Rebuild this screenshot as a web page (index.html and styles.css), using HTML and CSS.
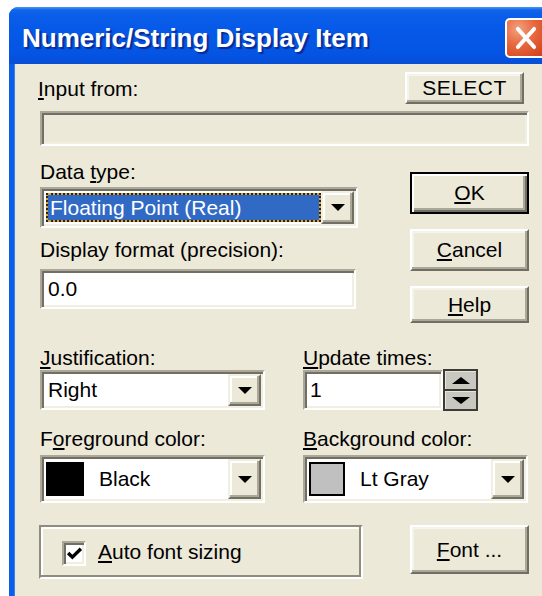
FILE: index.html
```html
<!DOCTYPE html>
<html lang="en">
<head>
<meta charset="utf-8">
<title>Numeric/String Display Item</title>
<link rel="stylesheet" href="styles.css">
</head>
<body>
<div class="window">
  <div class="titlebar">
    <span class="title">Numeric/String Display Item</span>
    <div class="close">
      <svg viewBox="0 0 42 40" width="42" height="40" aria-hidden="true">
        <path d="M12 10 L30 30 M30 10 L12 30" stroke="#fff" stroke-width="4.5" stroke-linecap="round"/>
      </svg>
    </div>
  </div>

  <div class="client">
    <div class="row-input">
      <span class="label"><u>I</u>nput from:</span>
      <div class="btn btn-select">SELECT</div>
    </div>
    <div class="field field-disabled field-input"></div>

    <div class="mid">
      <div class="mid-left">
        <div class="label label-dtype">Data <u>t</u>ype:</div>
        <div class="combo combo-dtype">
          <div class="combo-value">
            <span class="sel">Floating Point (Real)</span>
          </div>
          <div class="drop"><span class="tri"></span></div>
        </div>
        <div class="label label-format">Display format (precision):</div>
        <div class="field field-format">0.0</div>
      </div>
      <div class="mid-right">
        <div class="btn btn-side btn-default"><span><u>O</u>K</span></div>
        <div class="btn btn-side btn-cancel"><span><u>C</u>ancel</span></div>
        <div class="btn btn-side btn-help"><span><u>H</u>elp</span></div>
      </div>
    </div>

    <div class="pairs">
      <div class="label"><u>J</u>ustification:</div>
      <div class="label"><u>U</u>pdate times:</div>
      <div class="combo combo-small">
        <div class="combo-value">Right</div>
        <div class="drop"><span class="tri"></span></div>
      </div>
      <div class="spin-row">
        <div class="field field-spin">1</div>
        <div class="spin">
          <div class="spin-half"><span class="tri tri-up"></span></div>
          <div class="spin-half"><span class="tri"></span></div>
        </div>
      </div>

      <div class="label label-color">F<u>o</u>reground color:</div>
      <div class="label label-color"><u>B</u>ackground color:</div>
      <div class="combo combo-color">
        <div class="combo-value"><span class="swatch swatch-black"></span><span class="color-name">Black</span></div>
        <div class="drop"><span class="tri"></span></div>
      </div>
      <div class="combo combo-color">
        <div class="combo-value"><span class="swatch swatch-gray"></span><span class="color-name">Lt Gray</span></div>
        <div class="drop"><span class="tri"></span></div>
      </div>
    </div>

    <div class="bottom">
      <div class="groupbox">
        <span class="checkbox">
          <svg viewBox="0 0 16 16" width="17" height="17" aria-hidden="true">
            <path d="M2 7.5 L6 11.5 L14 3.5" fill="none" stroke="#000" stroke-width="3.2"/>
          </svg>
        </span>
        <span class="check-label"><u>A</u>uto font sizing</span>
      </div>
      <div class="btn btn-font"><span><u>F</u>ont ...</span></div>
    </div>
  </div>
</div>
</body>
</html>
```

FILE: styles.css
```css
html, body {
  margin: 0;
  padding: 0;
  background: #fff;
  overflow: hidden;
}

body {
  padding: 7px 0 0 9px;
  font-family: "Liberation Sans", Arial, sans-serif;
  font-size: 21px;
  color: #000;
}

u {
  text-decoration: underline;
  text-underline-offset: 2px;
  text-decoration-thickness: 2px;
}

/* ---------- window frame ---------- */
.window {
  width: 548px;
  height: 589px;
  display: flex;
  flex-direction: column;
  border-radius: 9px 9px 0 0;
  overflow: hidden;
  background: #0a5ee8;
}

.titlebar {
  height: 57px;
  flex: none;
  display: flex;
  align-items: center;
  padding: 0 10px 0 13px;
  background: linear-gradient(#4a97f7 0, #1266ec 5%, #0a5fea 12%, #0658e6 45%, #0555e4 80%, #0550df 92%, #0a4fd0 100%);
}

.title {
  color: #fff;
  font-weight: bold;
  font-size: 26px;
  text-shadow: 2px 2px 1px #0b2a94;
  margin-top: 5px;
}

.close {
  margin-left: auto;
  width: 42px;
  height: 40px;
  box-sizing: border-box;
  border: 2px solid #fff;
  border-radius: 5px;
  background: radial-gradient(circle at 30% 25%, #f3a280 0, #e96b42 40%, #d84c24 78%, #c84119 100%);
  display: flex;
  align-items: center;
  justify-content: center;
  margin-top: 4px;
}
.close svg {
  display: block;
  width: 38px;
  height: 36px;
}

.client {
  flex: 1;
  margin-left: 5px;
  background: #ece9d8;
  padding: 8px 0 0 26px;
  box-shadow: inset 1px 0 #3a80ee;
}

/* ---------- text ---------- */
.label {
  line-height: 22px;
  white-space: nowrap;
}

/* ---------- classic 3d controls ---------- */
.btn {
  box-sizing: border-box;
  background: #ece9d8;
  border: 2px solid;
  border-color: #ffffff #716f64 #716f64 #ffffff;
  box-shadow: inset -2px -2px #aca899, inset 2px 2px #f5f4ec;
  display: flex;
  align-items: center;
  justify-content: center;
  line-height: 22px;
}

.field {
  box-sizing: border-box;
  background: #fff;
  border: 2px solid;
  border-color: #aca899 #ffffff #ffffff #aca899;
  box-shadow: inset 2px 2px #716f64, inset -2px -2px #f1efe2;
  padding: 0 6px;
  display: flex;
  align-items: center;
}

.field-disabled {
  background: #ece9d8;
}

/* ---------- first rows ---------- */
.row-input {
  width: 484px;
  display: flex;
  align-items: center;
  justify-content: space-between;
  height: 32px;
}
.row-input .label {
  margin-top: 2px;
  margin-left: -2px;
}
.btn-select {
  width: 119px;
  height: 32px;
  letter-spacing: 0.5px;
}

.field-input {
  margin-top: 7px;
  width: 489px;
  height: 35px;
}

/* ---------- data type / format + side buttons ---------- */
.mid {
  display: flex;
  width: 489px;
  justify-content: space-between;
}

.mid-left {
  width: 318px;
}
.label-dtype {
  margin-top: 15px;
}
.combo-dtype {
  margin-top: 4px;
  height: 41px;
}
.label-format {
  margin-top: 11px;
}
.field-format {
  margin-top: 8px;
  width: 316px;
  height: 40px;
}

.mid-right {
  width: 119px;
  padding-top: 26px;
  display: flex;
  flex-direction: column;
  gap: 15px;
}
.btn-side {
  height: 42px;
}
.btn-help {
  height: 37px;
}
.btn-default {
  border: 2px solid #000;
  box-shadow: inset 2px 2px #fff, inset -2px -2px #716f64, inset -4px -4px #aca899;
}

/* ---------- combo boxes ---------- */
.combo {
  box-sizing: border-box;
  display: flex;
  align-items: stretch;
  background: #fff;
  border: 2px solid;
  border-color: #aca899 #ffffff #ffffff #aca899;
  box-shadow: inset 2px 2px #716f64, inset -2px -2px #f1efe2;
  padding: 2px;
}
.combo-value {
  flex: 1;
  display: flex;
  align-items: center;
  padding-left: 4px;
  white-space: nowrap;
}
.combo-dtype .combo-value {
  padding: 2px 0 2px 2px;
}
.sel {
  flex: 1;
  align-self: stretch;
  display: flex;
  align-items: center;
  padding-left: 2px;
  color: #fff;
  border: 2px dotted #2a2418;
  background: linear-gradient(#316ac5, #316ac5) padding-box, #d9a23c border-box;
}

.drop {
  width: 33px;
  flex: none;
  box-sizing: border-box;
  background: #ece9d8;
  border: 2px solid;
  border-color: #f1efe2 #716f64 #716f64 #f1efe2;
  box-shadow: inset -2px -2px #aca899, inset 2px 2px #fff;
  display: flex;
  align-items: center;
  justify-content: center;
}
.tri {
  width: 0;
  height: 0;
  border-left: 7px solid transparent;
  border-right: 7px solid transparent;
  border-top: 7px solid #000;
}
.tri-up {
  border-top: 0;
  border-bottom: 7px solid #000;
}

/* ---------- paired rows ---------- */
.pairs {
  display: grid;
  grid-template-columns: 225px 225px;
  column-gap: 38px;
  margin-top: 24px;
}
.combo-small {
  margin-top: 1px;
  height: 40px;
}

.spin-row {
  margin-top: 1px;
  display: flex;
  height: 40px;
}
.field-spin {
  width: 140px;
  height: 40px;
  padding-left: 5px;
}
.spin {
  width: 35px;
  height: 42px;
  margin-top: -1px;
  box-sizing: border-box;
  border: 2px solid #3c3b36;
  background: #3c3b36;
  display: flex;
  flex-direction: column;
  gap: 2px;
}
.spin-half {
  flex: 1;
  background: #c8c7c0;
  display: flex;
  align-items: center;
  justify-content: center;
  box-shadow: inset 1px 1px #e6e5de;
}
.spin .tri {
  border-left-width: 9px;
  border-right-width: 9px;
}

.label-color {
  margin-top: 18px;
}
.combo-color {
  margin-top: 5px;
  height: 48px;
}
.combo-color .combo-value {
  padding-left: 2px;
}
.swatch {
  width: 38px;
  height: 34px;
  box-sizing: border-box;
  flex: none;
}
.swatch-black {
  background: #000;
}
.swatch-gray {
  background: #c0c0c0;
  border: 2px solid #000;
  width: 36px;
}
.color-name {
  margin-left: 15px;
}

/* ---------- bottom row ---------- */
.bottom {
  display: flex;
  justify-content: space-between;
  align-items: flex-start;
  width: 489px;
  margin-top: 22px;
}
.groupbox {
  box-sizing: border-box;
  width: 324px;
  height: 54px;
  margin-left: -1px;
  border: 2px solid;
  border-color: #8e8c80 #ffffff #ffffff #8e8c80;
  box-shadow: inset -2px -2px #8e8c80, inset 2px 2px #fff;
  display: flex;
  align-items: center;
  padding-left: 21px;
}
.checkbox {
  box-sizing: border-box;
  width: 24px;
  height: 25px;
  background: #fff;
  border: 2px solid;
  border-color: #aca899 #fff #fff #aca899;
  box-shadow: inset 2px 2px #716f64, inset -2px -2px #f1efe2;
  display: flex;
  align-items: center;
  justify-content: center;
  margin-top: 2px;
}
.checkbox svg {
  display: block;
}
.check-label {
  margin-left: 12px;
}
.btn-font {
  width: 119px;
  height: 49px;
}
```
